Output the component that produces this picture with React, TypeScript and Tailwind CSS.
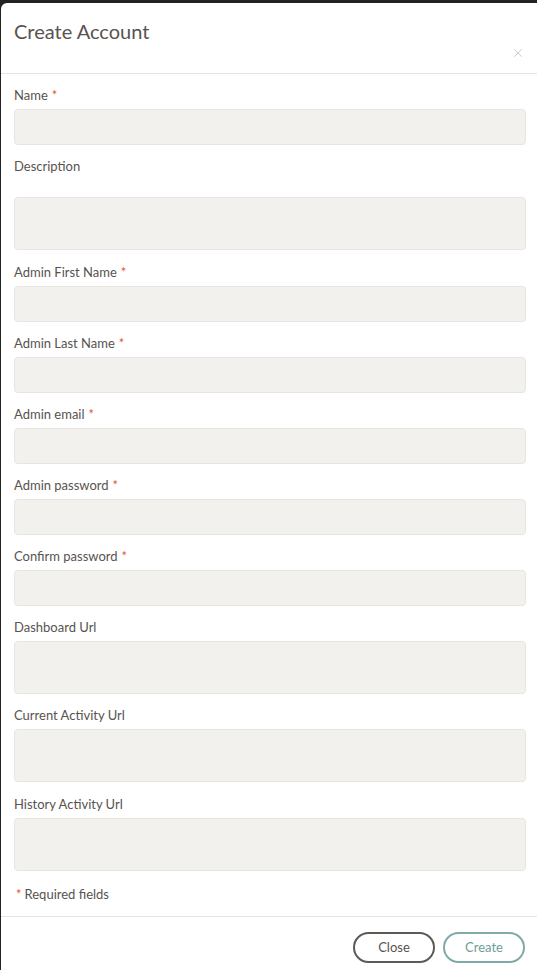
import { X } from "lucide-react";

interface Field {
  label: string;
  required?: boolean;
  multiline?: boolean;
  extraGap?: boolean;
}

const fields: Field[] = [
  { label: "Name", required: true },
  { label: "Description", multiline: true, extraGap: true },
  { label: "Admin First Name", required: true },
  { label: "Admin Last Name", required: true },
  { label: "Admin email", required: true },
  { label: "Admin password", required: true },
  { label: "Confirm password", required: true },
  { label: "Dashboard Url", multiline: true },
  { label: "Current Activity Url", multiline: true },
  { label: "History Activity Url", multiline: true },
];

const App = () => {
  return (
    <div
      className="min-h-[970px] bg-[#232323] pt-[3px] pl-[1px]"
      style={{ fontFamily: "Lato, 'Open Sans', sans-serif" }}
    >
      <div className="bg-white rounded-tl-[6px] h-[967px] flex flex-col">
        {/* Header */}
        <div className="h-[71px] shrink-0 border-b border-[#e6e4e1] flex relative">
          <h2 className="pl-[13px] pt-[16px] text-[20px] leading-[24px] text-[#58534f]">
            Create Account
          </h2>
          <button className="absolute right-[12px] top-[43px] text-[#c4c2bf]">
            <X size={14} strokeWidth={1.4} />
          </button>
        </div>

        {/* Body */}
        <div className="pt-[12px] pl-[13px] pr-[11px] flex flex-col">
          {fields.map((f) => (
            <div key={f.label} className={f.multiline ? "mb-[12.5px]" : "mb-[12px]"}>
              <label
                className={`block text-[13px] leading-[18px] text-[#58534f] ${
                  f.extraGap ? "mb-[22px]" : "mb-[5px]"
                }`}
              >
                {f.label}
                {f.required && <span className="text-[#e0592d] ml-[4px]">*</span>}
              </label>
              {f.multiline ? (
                <textarea className="block w-full h-[53px] resize-none rounded-[4px] bg-[#f2f1ee] border border-[#e7e5e1]" />
              ) : (
                <input className="block w-full h-[36px] rounded-[4px] bg-[#f2f1ee] border border-[#e7e5e1]" />
              )}
            </div>
          ))}
          <p className="mt-[2px] text-[13px] leading-[18px] text-[#58534f] pl-[2px]">
            <span className="text-[#e0592d] mr-[3px]">*</span>Required fields
          </p>
        </div>

        {/* Footer */}
        <div className="mt-[13px] border-t border-[#e6e4e1] flex justify-end gap-[8px] pt-[15px] pr-[12px]">
          <button className="w-[82px] h-[31px] rounded-full border-2 border-[#5e5955] text-[13px] text-[#58534f]">
            Close
          </button>
          <button className="w-[82px] h-[31px] rounded-full border-2 border-[#80aaa8] text-[13px] text-[#6f9d9b]">
            Create
          </button>
        </div>
      </div>
    </div>
  );
};

export default App;
